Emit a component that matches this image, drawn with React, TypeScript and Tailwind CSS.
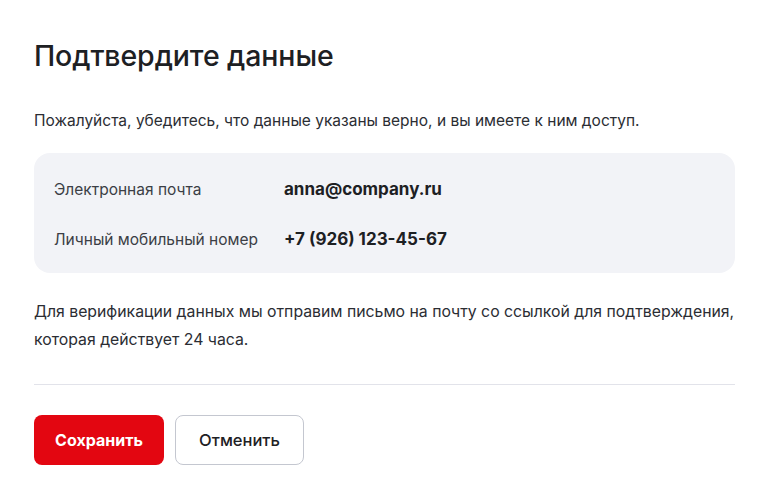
export default function App() {
  const rows = [
    { label: "Электронная почта", value: "anna@company.ru" },
    { label: "Личный мобильный номер", value: "+7 (926) 123-45-67" },
  ];

  return (
    <div
      className="w-[769px] h-[501px] bg-white text-[#1d2023]"
      style={{ fontFamily: "Inter, 'Noto Sans', sans-serif" }}
    >
      <div className="px-[34px] pt-[38px]">
        <h1 className="text-[28.5px] leading-[36px] font-medium tracking-[-0.1px] text-[#1d2023]">
          Подтвердите данные
        </h1>
        <p className="mt-[35px] text-[15.5px] leading-[24px] text-[#2b2d33]">
          Пожалуйста, убедитесь, что данные указаны верно, и вы имеете к ним доступ.
        </p>

        <div className="mt-[20px] rounded-[16px] bg-[#f2f3f7] px-[20px] pt-[19px] pb-[15px] flex flex-col gap-[14px]">
          {rows.map((r) => (
            <div key={r.label} className="flex items-center h-[36px]">
              <span className="w-[230px] text-[15.5px] text-[#3b3e45]">{r.label}</span>
              <span className="text-[17px] font-bold text-[#1d2023]">{r.value}</span>
            </div>
          ))}
        </div>

        <p className="mt-[25px] text-[15.8px] leading-[28px] text-[#2b2d33]">
          Для верификации данных мы отправим письмо на почту со ссылкой для подтверждения,
          которая действует 24 часа.
        </p>

        <div className="mt-[30px] h-px bg-[#e2e3ea]" />

        <div className="mt-[30px] flex gap-[11px]">
          <button className="h-[50px] w-[130px] rounded-[8px] bg-[#e30611] text-white text-[16px] font-bold">
            Сохранить
          </button>
          <button className="h-[50px] w-[129px] rounded-[8px] border border-[#c4c7d0] bg-white text-[16.5px] font-medium text-[#1d2023]">
            Отменить
          </button>
        </div>
      </div>
    </div>
  );
}
